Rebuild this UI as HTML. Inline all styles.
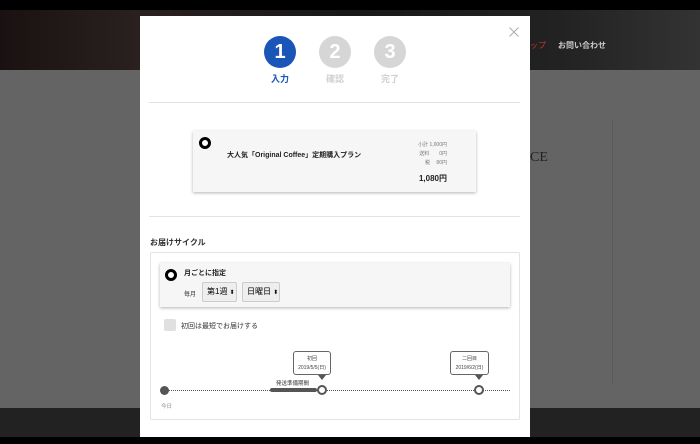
<!DOCTYPE html>
<html><head><meta charset="utf-8"><style>
*{margin:0;padding:0;box-sizing:border-box}
body{width:700px;height:444px;overflow:hidden;background:#000;font-family:"Liberation Sans","Noto Sans CJK JP",sans-serif;position:relative}
.abs{position:absolute}
.hdr{left:0;top:10px;width:700px;height:60px;background:linear-gradient(90deg,#1a1212,#2a2020 20%,#181818 50%,#222 80%,#333)}
.gray{left:0;top:70px;width:700px;height:338px;background:#646464}
.dark{left:0;top:408px;width:700px;height:29px;background:#222}
.modal{left:140px;top:16px;width:390px;height:421px;background:#fff}
.step{width:32px;height:32px;border-radius:50%;color:#fff;font-weight:bold;font-size:20px;text-align:center;line-height:32px}
.lbl{font-size:9px;font-weight:bold;text-align:center;width:40px}
.hr{height:1px;background:#e2e2e2;left:9px;width:371px}
.card{background:#f6f6f6;box-shadow:0 1px 3px rgba(0,0,0,.3)}
.radio{width:12px;height:12px;border-radius:50%;border:3.5px solid #000;background:#fff}
.sel{background:#eee;border:1px solid #ccc;border-radius:2px;font-size:8px;line-height:18px;padding-left:4px;height:20px}
.tip{background:#fff;border:1.5px solid #666;border-radius:3px;font-size:5px;text-align:center;line-height:9px;color:#444;padding-top:3px}
.dot{width:10px;height:10px;border-radius:50%;border:2px solid #555;background:#fff}
</style></head><body>
<div class="abs hdr"></div>
<div class="abs gray"></div>
<div class="abs" style="left:612px;top:120px;width:1px;height:265px;background:#5a5a5a"></div>
<div class="abs" style="left:530px;top:150px;font-family:'Liberation Serif',serif;font-size:14px;color:#222">CE</div>
<div class="abs" style="left:530px;top:40px;font-size:8px;color:#c33">ップ</div>
<div class="abs" style="left:558px;top:40px;font-size:8px;color:#ccc;font-weight:bold">お問い合わせ</div>
<div class="abs dark"></div>
<div class="abs modal">
 <svg class="abs" style="left:369px;top:11px" width="10" height="10"><path d="M0.5 0.5L9.5 9.5M9.5 0.5L0.5 9.5" stroke="#aaa" stroke-width="1"/></svg>
 <div class="abs step" style="left:124px;top:20px;background:#1a56b8">1</div>
 <div class="abs step" style="left:179px;top:20px;background:#d6d6d6">2</div>
 <div class="abs step" style="left:234px;top:20px;background:#d6d6d6">3</div>
 <div class="abs lbl" style="left:120px;top:56px;color:#1a56b8">入力</div>
 <div class="abs lbl" style="left:175px;top:56px;color:#d0d0d0">確認</div>
 <div class="abs lbl" style="left:230px;top:56px;color:#d0d0d0">完了</div>
 <div class="abs hr" style="top:86px"></div>
 <div class="abs card" style="left:53px;top:115px;width:283px;height:61px">
  <div class="abs radio" style="left:6px;top:6px"></div>
  <div class="abs" style="left:34px;top:19px;font-size:7px;font-weight:bold;color:#222">大人気「Original Coffee」定期購入プラン</div>
  <div class="abs" style="left:218px;top:10px;font-size:5px;color:#777;line-height:9px;text-align:right;width:36px">小計 1,000円<br>送料　　0円<br>税　 80円</div>
  <div class="abs" style="left:218px;top:42px;font-size:8px;font-weight:bold;color:#222;width:36px;text-align:right">1,080円</div>
 </div>
 <div class="abs hr" style="top:200px"></div>
 <div class="abs" style="left:10px;top:221px;font-size:8px;font-weight:bold;color:#333">お届けサイクル</div>
 <div class="abs" style="left:10px;top:236px;width:370px;height:168px;border:1px solid #e4e4e4;border-radius:2px"></div>
 <div class="abs card" style="left:20px;top:247px;width:350px;height:44px">
  <div class="abs radio" style="left:5px;top:6px"></div>
  <div class="abs" style="left:24px;top:5px;font-size:7px;font-weight:bold;color:#222">月ごとに指定</div>
  <div class="abs" style="left:24px;top:26px;font-size:6px;color:#333">毎月</div>
  <div class="abs sel" style="left:42px;top:19px;width:35px">第1週 <span style="font-size:6px">⬍</span></div>
  <div class="abs sel" style="left:82px;top:19px;width:38px">日曜日 <span style="font-size:6px">⬍</span></div>
 </div>
 <div class="abs" style="left:24px;top:303px;width:12px;height:12px;background:#e0e0e0;border-radius:2px"></div>
 <div class="abs" style="left:41px;top:305px;font-size:7px;color:#333">初回は最短でお届けする</div>
 <div class="abs" style="left:24px;top:374px;width:346px;border-top:1px dotted #555"></div>
 <div class="abs" style="left:130px;top:372px;width:47px;height:4px;background:#555;border-radius:2px"></div>
 <div class="abs" style="left:136px;top:363px;font-size:5.5px;color:#333">発送準備期間</div>
 <div class="abs" style="left:20px;top:370px;width:9px;height:9px;border-radius:50%;background:#555"></div>
 <div class="abs" style="left:21px;top:386px;font-size:5.5px;color:#888">今日</div>
 <div class="abs dot" style="left:177px;top:369px"></div>
 <div class="abs dot" style="left:334px;top:369px"></div>
 <div class="abs tip" style="left:153px;top:335px;width:38px;height:24px">初回<br>2019/5/5(日)</div>
 <div class="abs" style="left:178px;top:359px;border:4px solid transparent;border-top:5px solid #555"></div>
 <div class="abs tip" style="left:310px;top:335px;width:39px;height:24px">二回目<br>2019/6/2(日)</div>
 <div class="abs" style="left:335px;top:359px;border:4px solid transparent;border-top:5px solid #555"></div>
</div>
</body></html>
